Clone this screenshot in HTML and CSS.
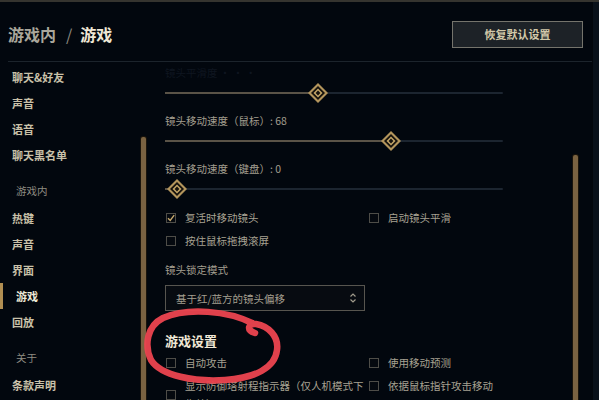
FILE: index.html
```html
<!DOCTYPE html>
<html lang="zh-CN">
<head>
<meta charset="utf-8">
<title>游戏设置</title>
<link rel="stylesheet" href="styles.css">
</head>
<body>
<svg class="defs" width="0" height="0" aria-hidden="true">
  <symbol id="thumb" viewBox="0 0 20 20">
    <polygon points="10,0 20,10 10,20 0,10" fill="#b3955c"/>
    <polygon points="10,3 17,10 10,17 3,10" fill="#14110c"/>
    <polygon points="10,5.5 14.5,10 10,14.5 5.5,10" fill="#c4a567"/>
    <polygon points="10,7.6 12.4,10 10,12.4 7.6,10" fill="#16130e"/>
  </symbol>
</svg>
<div class="frame">
  <div class="main">
    <header class="header">
      <h1 class="crumbs"><span class="crumb-parent">游戏内</span><span class="crumb-sep">/</span><span class="crumb-cur">游戏</span></h1>
      <button class="reset">恢复默认设置</button>
    </header>
    <div class="body">
      <nav class="sidebar">
        <ul class="nav">
          <li class="item">聊天&amp;好友</li>
          <li class="item">声音</li>
          <li class="item">语音</li>
          <li class="item">聊天黑名单</li>
          <li class="section">游戏内</li>
          <li class="item">热键</li>
          <li class="item">声音</li>
          <li class="item">界面</li>
          <li class="item active">游戏</li>
          <li class="item">回放</li>
          <li class="section">关于</li>
          <li class="item">条款声明</li>
        </ul>
        <div class="sb-track side-sb"><div class="sb-thumb"></div></div>
      </nav>
      <section class="content">
        <div class="label faded">镜头平滑度 · · ·</div>
        <div class="slider" style="--v:45">
          <div class="fill"></div><div class="rest"></div>
          <svg class="thumb"><use href="#thumb"/></svg>
        </div>
        <div class="label gap">镜头移动速度（鼠标）: 68</div>
        <div class="slider" style="--v:68">
          <div class="fill"></div><div class="rest"></div>
          <svg class="thumb"><use href="#thumb"/></svg>
        </div>
        <div class="label gap">镜头移动速度（键盘）: 0</div>
        <div class="slider" style="--v:0">
          <div class="fill"></div><div class="rest"></div>
          <svg class="thumb"><use href="#thumb"/></svg>
        </div>

        <div class="opts first">
          <div class="opt"><span class="box checked"><svg viewBox="0 0 10 10"><polyline points="2,5.2 4.2,7.5 8.2,2.2" fill="none" stroke="#c8aa6e" stroke-width="1.4"/></svg></span><span class="opt-text">复活时移动镜头</span></div>
          <div class="opt"><span class="box"></span><span class="opt-text">启动镜头平滑</span></div>
          <div class="opt"><span class="box"></span><span class="opt-text">按住鼠标拖拽滚屏</span></div>
          <div></div>
        </div>

        <div class="label lock">镜头锁定模式</div>
        <div class="select">
          <span class="select-text">基于红/蓝方的镜头偏移</span>
          <svg class="chev" viewBox="0 0 8 12"><polyline points="1.5,4.5 4,2 6.5,4.5" fill="none" stroke="#a09b8c" stroke-width="1.2"/><polyline points="1.5,7.5 4,10 6.5,7.5" fill="none" stroke="#a09b8c" stroke-width="1.2"/></svg>
        </div>

        <h2 class="heading">游戏设置</h2>
        <div class="opts game">
          <div class="opt"><span class="box"></span><span class="opt-text">自动攻击</span></div>
          <div class="opt"><span class="box"></span><span class="opt-text">使用移动预测</span></div>
        </div>
        <div class="opts game second">
          <div class="opt"><span class="box"></span><span class="opt-text">显示防御塔射程指示器（仅人机模式下生效）</span></div>
          <div class="opt"><span class="box"></span><span class="opt-text">依据鼠标指针攻击移动</span></div>
        </div>
      </section>
      <div class="sb-track main-sb"><div class="sb-thumb"></div></div>
    </div>
  </div>
  <div class="edge"></div>
</div>
<svg class="mark" viewBox="0 0 599 400" aria-hidden="true">
  <path d="M 252 323 C 228 311, 188 307, 163 318 C 147 326, 144 345, 151 360 C 161 376, 195 382, 225 380 C 255 378, 275 368, 277 350 C 279 336, 268 326, 256 324 C 248 323, 246 330, 255 333" fill="none" stroke="#ec4550" stroke-width="6.5" stroke-linecap="round" stroke-linejoin="round"/>
</svg>
</body>
</html>
```

FILE: styles.css
```css
* { box-sizing: border-box; }
html, body { margin: 0; padding: 0; }
body {
  width: 599px;
  height: 400px;
  overflow: hidden;
  background: #02070e;
  font-family: "Noto Sans CJK SC", "Noto Sans", sans-serif;
  color: #a09b8c;
  position: relative;
}
.defs { position: absolute; }
.frame {
  display: flex;
  height: 400px;
  border-top: 2px solid #35342f;
}
.main {
  flex: 1;
  display: flex;
  flex-direction: column;
  min-width: 0;
}
.edge {
  width: 7px;
  background: #09111a;
  border-left: 1px solid #03070c;
}
.header {
  height: 60px;
  margin-left: 8px;
  padding: 4px 9px 0 0;
  display: flex;
  align-items: center;
  justify-content: space-between;
  border-bottom: 1px solid #1c242c;
}
.crumbs {
  margin: 0;
  font-size: 16px;
  font-weight: 700;
  line-height: 22px;
  display: flex;
  align-items: center;
}
.crumb-parent { color: #aaa79c; }
.crumb-sep { color: #8d8a80; margin: 0 8px 0 10px; font-weight: 400; }
.crumb-cur { color: #f0e8d6; }
.reset {
  width: 131px;
  height: 27px;
  margin-top: 1px;
  background: #1d2227;
  border: 1px solid #75746c;
  color: #d3c9a9;
  font-family: inherit;
  font-size: 11px;
  font-weight: 700;
  padding: 0;
  cursor: pointer;
}
.body {
  flex: 1;
  display: flex;
  min-height: 0;
}
.sidebar {
  width: 148px;
  display: flex;
}
.nav {
  flex: 1;
  list-style: none;
  margin: 0;
  padding: 2px 0 0 0;
}
.item {
  height: 26px;
  line-height: 26px;
  padding-left: 12px;
  font-size: 11px;
  font-weight: 700;
  color: #c9c1a9;
}
.item.active {
  padding-left: 16px;
  color: #f0ead8;
  box-shadow: inset 3px 0 0 #b08e52;
}
.section {
  height: 28px;
  line-height: 28px;
  margin-top: 9px;
  padding-left: 16px;
  font-size: 10.5px;
  color: #8f8c82;
}
.sb-track {
  width: 5px;
  display: flex;
  flex-direction: column;
}
.side-sb { margin-right: 2px; }
.side-sb .sb-thumb { margin-top: 75px; }
.main-sb { margin-right: 14px; }
.main-sb .sb-thumb { margin-top: 93px; }
.sb-thumb {
  flex: 1;
  background: #7a6241;
  border-radius: 2px 2px 0 0;
  box-shadow: 0 0 0 1px #1a140b;
}
.content {
  flex: 1;
  padding: 1px 0 0 17px;
  min-width: 0;
}
.label {
  height: 20px;
  line-height: 20px;
  font-size: 10.5px;
  color: #a39e8f;
  white-space: nowrap;
}
.label.faded { color: #0f1620; }
.label.gap { margin-top: 8px; }
.slider {
  position: relative;
  width: 338px;
  height: 20px;
  display: flex;
  align-items: center;
}
.fill {
  height: 2px;
  width: calc(12px + 3.14px * var(--v));
  background: #5a5347;
}
.rest {
  flex: 1;
  height: 2px;
  background: #1c2530;
  border-radius: 0 1px 1px 0;
}
.thumb {
  position: absolute;
  top: 0;
  left: calc(2px + 3.14px * var(--v));
  width: 20px;
  height: 20px;
}
.opts {
  display: grid;
  grid-template-columns: 203px 1fr;
  grid-auto-rows: 22px;
  row-gap: 1px;
}
.opts.first { margin-top: 8px; }
.opt {
  display: flex;
  align-items: center;
  gap: 9px;
}
.box {
  width: 10px;
  height: 10px;
  margin-left: 1px;
  flex: none;
  border: 1px solid #4e4d48;
  background: #05090f;
  display: flex;
}
.box svg { width: 10px; height: 10px; margin: -1px; }
.opt-text {
  font-size: 10.5px;
  line-height: 18px;
  color: #a7a292;
}
.label.lock { margin-top: 8px; }
.select {
  margin-top: 5px;
  width: 200px;
  height: 26px;
  border: 1px solid #57554f;
  background: #070b11;
  display: flex;
  align-items: center;
  justify-content: space-between;
  padding: 0 7px 0 10px;
}
.select-text {
  font-size: 10.5px;
  color: #a39e8f;
}
.chev { width: 8px; height: 12px; }
.heading {
  margin: 19px 0 0 0;
  height: 22px;
  line-height: 22px;
  font-size: 13px;
  font-weight: 700;
  color: #f0e8d6;
}
.opts.game { grid-auto-rows: auto; }
.opts.game .opt { min-height: 22px; }
.opts.second { margin-top: 3px; align-items: start; }
.opts.second .opt { min-height: 18px; }
.opts.second .opt-text { width: 180px; }
.mark {
  position: absolute;
  left: 0;
  top: 0;
  width: 599px;
  height: 400px;
  pointer-events: none;
  opacity: 0.95;
}
```
